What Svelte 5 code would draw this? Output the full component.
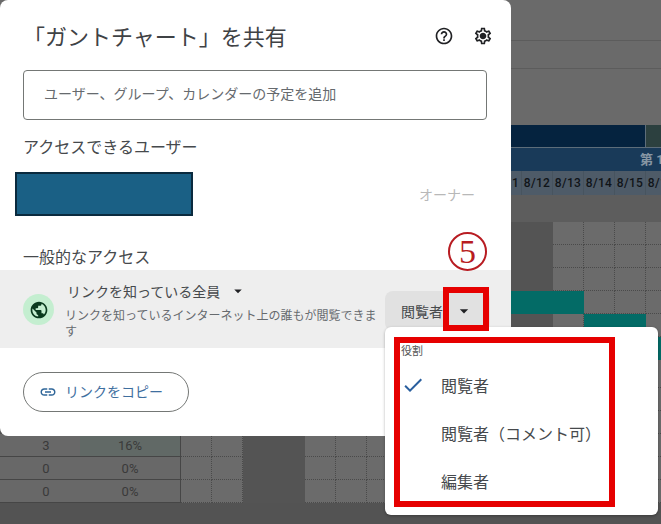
<script>
  const days = Array.from({ length: 16 }, (_, i) => i);
  const weekend = [2, 3, 10, 11];
  const rowHeights = [23, 23, 23, 23, 23, 23, 28, 23, 23, 23, 23, 23];
  const teal = { 3: [10, 11, 12], 4: [13, 14], 5: [15] };
  const rowData = { 9: ['3', '16%'], 10: ['0', '0%'], 11: ['0', '0%'] };
</script>

<div class="page">
  <div class="sheet">
    <div class="band band-a"></div>
    <div class="band band-b"></div>
    <div class="band band-c"></div>
    <div class="band-head"><div class="navy"></div><div class="olive"></div></div>
    <div class="band-week"><span>第 1</span></div>
    <div class="band-dates">
      <div class="dates-lead"></div>
      {#each days as d}<div class="date">{d >= 10 ? `8/${d + 1}` : ''}</div>{/each}
    </div>
    <div class="band-gap"></div>
    {#each rowHeights as h, r}
      <div class="row" style="height:{h}px">
        <div class="data" class:boxed={rowData[r]}>
          {#if rowData[r]}
            <div class="num">{rowData[r][0]}</div>
            <div class="pct" class:hot={r === 9}>{rowData[r][1]}</div>
          {/if}
        </div>
        {#each days as d}
          <div class="cell" class:off={weekend.includes(d)} class:teal={teal[r]?.includes(d)}></div>
        {/each}
      </div>
    {/each}
  </div>

  <section class="dialog">
    <header class="head">
      <h1>「ガントチャート」を共有</h1>
      <div class="head-icons">
        <svg viewBox="0 0 24 24" class="ico"><path d="M11 18h2v-2h-2v2zm1-16C6.48 2 2 6.48 2 12s4.48 10 10 10 10-4.48 10-10S17.52 2 12 2zm0 18c-4.41 0-8-3.59-8-8s3.59-8 8-8 8 3.59 8 8-3.59 8-8 8zm0-14c-2.21 0-4 1.79-4 4h2c0-1.1.9-2 2-2s2 .9 2 2c0 2-3 1.75-3 5h2c0-2.25 3-2.5 3-5 0-2.21-1.79-4-4-4z"/></svg>
        <svg viewBox="0 0 24 24" class="ico"><path d="M19.43 12.98c.04-.32.07-.64.07-.98 0-.34-.03-.66-.07-.98l2.11-1.65c.19-.15.24-.42.12-.64l-2-3.46c-.09-.16-.26-.25-.44-.25-.06 0-.12.01-.17.03l-2.49 1c-.52-.4-1.08-.73-1.69-.98l-.38-2.65C14.46 2.18 14.25 2 14 2h-4c-.25 0-.46.18-.49.42l-.38 2.65c-.61.25-1.17.59-1.69.98l-2.49-1c-.06-.02-.12-.03-.18-.03-.17 0-.34.09-.43.25l-2 3.46c-.13.22-.07.49.12.64l2.11 1.65c-.04.32-.07.65-.07.98 0 .33.03.66.07.98l-2.11 1.65c-.19.15-.24.42-.12.64l2 3.46c.09.16.26.25.44.25.06 0 .12-.01.17-.03l2.49-1c.52.4 1.08.73 1.69.98l.38 2.65c.03.24.24.42.49.42h4c.25 0 .46-.18.49-.42l.38-2.65c.61-.25 1.17-.59 1.69-.98l2.49 1c.06.02.12.03.18.03.17 0 .34-.09.43-.25l2-3.46c.12-.22.07-.49-.12-.64l-2.11-1.65zm-1.98-1.71c.04.31.05.52.05.73 0 .21-.02.43-.05.73l-.14 1.13.89.7 1.08.84-.7 1.21-1.27-.51-1.04-.42-.9.68c-.43.32-.84.56-1.25.73l-1.06.43-.16 1.13-.2 1.35h-1.4l-.19-1.35-.16-1.13-1.06-.43c-.43-.18-.83-.41-1.23-.71l-.91-.7-1.06.43-1.27.51-.7-1.21 1.08-.84.89-.7-.14-1.13c-.03-.31-.05-.54-.05-.74s.02-.43.05-.73l.14-1.13-.89-.7-1.08-.84.7-1.21 1.27.51 1.04.42.9-.68c.43-.32.84-.56 1.25-.73l1.06-.43.16-1.13.2-1.35h1.39l.19 1.35.16 1.13 1.06.43c.43.18.83.41 1.23.71l.91.7 1.06-.43 1.27-.51.7 1.21-1.07.85-.89.7.14 1.13zM12 8c-2.21 0-4 1.79-4 4s1.79 4 4 4 4-1.79 4-4-1.79-4-4-4z"/></svg>
      </div>
    </header>

    <div class="input">ユーザー、グループ、カレンダーの予定を追加</div>

    <h2 class="label people">アクセスできるユーザー</h2>
    <div class="user">
      <div class="redact"></div>
      <span class="owner">オーナー</span>
    </div>

    <h2 class="label general">一般的なアクセス</h2>
    <div class="access">
      <div class="globe">
        <svg viewBox="0 0 24 24"><path d="M12 2C6.48 2 2 6.48 2 12s4.48 10 10 10 10-4.48 10-10S17.52 2 12 2zM4 12c0-.61.08-1.21.21-1.78L8.99 15v1c0 1.1.9 2 2 2v1.93C7.06 19.43 4 16.07 4 12zm13.89 5.4c-.26-.81-1-1.4-1.9-1.4h-1v-3c0-.55-.45-1-1-1h-6v-2h2c.55 0 1-.45 1-1V7h2c1.1 0 2-.9 2-2v-.41C17.92 5.77 20 8.65 20 12c0 2.08-.81 3.98-2.11 5.4z"/></svg>
      </div>
      <div class="access-text">
        <div class="who">リンクを知っている全員<svg viewBox="0 0 24 24" class="caret"><path d="M7 10l5 5 5-5z"/></svg></div>
        <div class="desc">リンクを知っているインターネット上の誰もが閲覧できます</div>
      </div>
      <div class="role-btn">
        <span>閲覧者</span>
        <svg viewBox="0 0 24 24" class="role-caret"><path d="M7 10l5 5 5-5z"/></svg>
      </div>
    </div>

    <button class="copy">
      <svg viewBox="0 0 24 24"><path d="M3.9 12c0-1.71 1.39-3.1 3.1-3.1h4V7H7c-2.76 0-5 2.24-5 5s2.24 5 5 5h4v-1.9H7c-1.71 0-3.1-1.39-3.1-3.1zM8 13h8v-2H8v2zm9-6h-4v1.9h4c1.71 0 3.1 1.39 3.1 3.1s-1.39 3.1-3.1 3.1h-4V17h4c2.76 0 5-2.24 5-5s-2.24-5-5-5z"/></svg>
      リンクをコピー
    </button>
  </section>

  <div class="menu">
    <div class="menu-title">役割</div>
    <div class="item">
      <svg viewBox="0 0 24 24" class="check"><path d="M9 16.17L4.83 12l-1.42 1.41L9 19 21 7l-1.41-1.41z"/></svg>
      閲覧者
    </div>
    <div class="item">閲覧者（コメント可）</div>
    <div class="item">編集者</div>
  </div>

  <div class="mark-num"><span>5</span></div>
  <div class="mark mark-caret"></div>
  <div class="mark mark-menu"></div>
</div>

<style>
  :global(body) { margin: 0; }
  .page {
    position: relative;
    width: 661px;
    height: 524px;
    overflow: hidden;
    background: #535353;
    font-family: "Noto Sans CJK JP", "Noto Sans", sans-serif;
    color: #444;
  }

  /* dimmed spreadsheet */
  .sheet { display: flex; flex-direction: column; }
  .band { background: #6a6a6a; border-bottom: 1px solid #5c5c5c; box-sizing: border-box; }
  .band-a { height: 41px; }
  .band-b { height: 28px; }
  .band-c { height: 56px; border-bottom: 0; }
  .band-head { display: flex; height: 23px; background: #05233f; border-bottom: 1px solid #5d6d7a; box-sizing: border-box; }
  .navy { width: 646px; border-right: 1px solid #5d6d7a; box-sizing: border-box; }
  .olive { flex: 1; background: #2c403f; }
  .band-week {
    height: 23px;
    background: #193a59;
    font: 700 13px/23px Roboto, "Noto Sans CJK JP", sans-serif;
    color: #8796a3;
    white-space: nowrap;
    display: flex;
    padding-left: 640px;
  }
  .band-week span { flex: none; }
  .band-dates {
    display: flex;
    height: 24px;
    background: #4e5b68;
  }
  .dates-lead { width: 181px; flex: none; }
  .date {
    width: 31px;
    flex: none;
    box-sizing: border-box;
    border-right: 1px solid #47545f;
    text-align: center;
    font: 500 12px/24px Roboto, sans-serif;
    letter-spacing: .3px;
    color: #101418;
    white-space: nowrap;
    overflow: hidden;
  }
  .band-gap { height: 27px; background: #5d5d5d; }
  .row { display: flex; }
  .data {
    width: 181px;
    flex: none;
    display: flex;
    box-sizing: border-box;
  }
  .data.boxed { border-bottom: 1px solid #464646; border-right: 1px solid #464646; background: #686868; }
  .num, .pct { font: 13px/24px Roboto, sans-serif; color: #3a3a3a; }
  .num { width: 80px; text-align: center; padding-left: 12px; box-sizing: border-box; }
  .pct { flex: 1; text-align: center; }
  .pct.hot { background: #616966; }
  .cell {
    width: 31px;
    flex: none;
    box-sizing: border-box;
    background: #6b6b6b;
    border-right: 1px dotted #4a4a4a;
    border-bottom: 1px dotted #4a4a4a;
  }
  .cell.off { background: #545454; border-color: #545454; }
  .cell.teal { background: #036b66; border-color: #036b66; }

  /* dialog */
  .dialog {
    position: absolute;
    left: 0;
    top: 0;
    width: 511px;
    height: 436px;
    background: #fff;
    border-radius: 8px;
    box-sizing: border-box;
  }
  .head {
    height: 70px;
    display: flex;
    align-items: center;
    justify-content: space-between;
    padding: 0 18px 0 23px;
  }
  h1 {
    margin: 0;
    font-size: 22px;
    font-weight: 400;
    line-height: 30px;
    color: #3f4245;
  }
  .head-icons { display: flex; gap: 19px; padding-top: 2px; }
  .ico { width: 20px; height: 20px; fill: #202124; display: block; }
  .input {
    margin: 0 24px 0 23px;
    height: 50px;
    box-sizing: border-box;
    border: 1px solid #747775;
    border-radius: 4px;
    padding-left: 20px;
    font-size: 14px;
    line-height: 45px;
    color: #666a6e;
  }
  .label {
    margin: 0 0 0 23px;
    font-size: 16px;
    font-weight: 400;
    line-height: 24px;
    color: #46494c;
  }
  .people { margin-top: 14px; }
  .general { margin-top: 28px; }
  .user {
    margin-top: 14px;
    height: 44px;
    display: flex;
    justify-content: space-between;
    align-items: center;
    padding: 0 36px 0 15px;
  }
  .redact {
    width: 178px;
    height: 44px;
    box-sizing: border-box;
    background: #1a6085;
    border: 2px solid #0a2a3e;
  }
  .owner { font-size: 14px; color: #b8b8b8; }
  .access {
    margin-top: 2px;
    height: 78px;
    background: #eee;
    display: flex;
    padding-left: 23px;
  }
  .globe {
    width: 31px;
    height: 31px;
    margin-top: 24px;
    flex: none;
    border-radius: 50%;
    background: #c4eed0;
    display: flex;
    align-items: center;
    justify-content: center;
  }
  .globe svg { width: 20px; height: 20px; fill: #0a3a1e; }
  .access-text { width: 313px; margin-left: 11px; flex: none; padding-top: 11px; }
  .who {
    display: flex;
    align-items: center;
    padding-left: 2px;
    font-size: 14px;
    line-height: 20px;
    color: #46494c;
  }
  .caret { width: 18px; height: 18px; margin-left: 9px; fill: #202124; }
  .desc { margin-top: 6px; font-size: 12px; line-height: 16px; color: #666a6e; }
  .role-btn {
    margin: 21px 0 0 7px;
    width: 105px;
    height: 40px;
    flex: none;
    box-sizing: border-box;
    background: #e1e1e1;
    border-radius: 8px;
    display: flex;
    align-items: center;
    padding-left: 16px;
    font-size: 14px;
    color: #46494c;
  }
  .role-caret { width: 20px; height: 20px; margin-left: 11px; fill: #202124; }
  .copy {
    margin: 24px 0 0 23px;
    width: 166px;
    height: 40px;
    box-sizing: border-box;
    display: flex;
    align-items: center;
    gap: 8px;
    padding: 0 0 2px 15px;
    background: #fff;
    border: 1px solid #747775;
    border-radius: 20px;
    font-family: inherit;
    font-size: 14px;
    color: #3f6f9f;
  }
  .copy svg { width: 18px; height: 18px; fill: #2f6699; flex: none; margin-top: 2px; }

  /* role menu */
  .menu {
    position: absolute;
    left: 385px;
    top: 327px;
    width: 273px;
    height: 188px;
    background: #fff;
    border-radius: 6px;
    box-shadow: 0 1px 3px rgba(0, 0, 0, .3);
    padding-top: 16px;
    box-sizing: border-box;
  }
  .menu-title { margin-left: 16px; font-size: 11px; line-height: 14px; color: #555; }
  .item {
    position: relative;
    height: 48px;
    padding-left: 56px;
    font-size: 16px;
    line-height: 46px;
    color: #46494c;
    white-space: nowrap;
  }
  .item:nth-child(2) { margin-top: 5px; }
  .check { position: absolute; left: 16px; top: 11px; width: 24px; height: 24px; fill: #2a5f9e; }

  /* red annotations */
  .mark { position: absolute; box-sizing: border-box; border: 6px solid #e60000; }
  .mark-caret { left: 443px; top: 287px; width: 46px; height: 44px; }
  .mark-menu { left: 394px; top: 337px; width: 221px; height: 170px; }
  .mark-num {
    position: absolute;
    left: 448px;
    top: 232px;
    width: 39px;
    height: 39px;
    box-sizing: border-box;
    border: 2px solid #b81c22;
    border-radius: 50%;
    color: #b81c22;
    font: 400 34px/35px "Liberation Serif", serif;
    text-align: center;
  }
</style>
